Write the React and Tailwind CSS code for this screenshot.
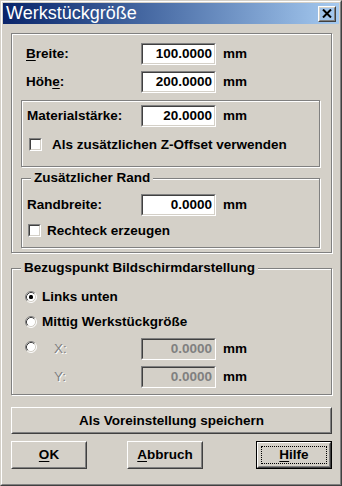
const FONT = "font-['Liberation_Sans',Arial,sans-serif]";

function Sunken({ className = '', inner = 'bg-white', children }) {
  return (
    <div className={`border border-t-[#808080] border-l-[#808080] border-r-white border-b-white ${className}`}>
      <div className={`h-full w-full border border-t-[#404040] border-l-[#404040] border-r-[#d4d0c8] border-b-[#d4d0c8] ${inner}`}>
        {children}
      </div>
    </div>
  );
}

function Raised({ className = '', children }) {
  return (
    <div className={`border border-t-white border-l-white border-r-[#404040] border-b-[#404040] ${className}`}>
      <div className="h-full w-full border border-t-[#d4d0c8] border-l-[#d4d0c8] border-r-[#808080] border-b-[#808080] flex items-center justify-center">
        {children}
      </div>
    </div>
  );
}

function Field({ value, disabled }) {
  return (
    <Sunken
      className="w-[75px] h-[22px] shrink-0"
      inner={disabled ? 'bg-[#d4d0c8] text-[#808080]' : 'bg-white text-black'}
    >
      <div className="h-full flex items-center justify-end pr-[2px]">{value}</div>
    </Sunken>
  );
}

function Etched({ className = '', caption, children }) {
  return (
    <div className={`relative border border-[#808080] shadow-[inset_1px_1px_0_#fff,1px_1px_0_#fff] ${className}`}>
      {caption && (
        <span className="absolute left-[9px] -top-[9px] leading-[16px] px-[3px] bg-[#d4d0c8]">{caption}</span>
      )}
      {children}
    </div>
  );
}

function Checkbox() {
  return <Sunken className="w-[13px] h-[13px] shrink-0" />;
}

function Radio({ checked }) {
  return (
    <svg width="12" height="12" viewBox="0 0 12 12" className="shrink-0">
      <circle cx="6" cy="6" r="5" fill="#fff" />
      <path d="M2.11 9.89A5.5 5.5 0 0 1 9.89 2.11" fill="none" stroke="#808080" />
      <path d="M9.89 2.11A5.5 5.5 0 0 1 2.11 9.89" fill="none" stroke="#fff" />
      <path d="M2.82 9.18A4.5 4.5 0 0 1 9.18 2.82" fill="none" stroke="#404040" />
      <path d="M9.18 2.82A4.5 4.5 0 0 1 2.82 9.18" fill="none" stroke="#d4d0c8" />
      {checked && <rect x="4" y="4" width="4" height="4" rx="1.5" fill="#000" />}
    </svg>
  );
}

function Row({ label, value, labelW, pl, className = '' }) {
  return (
    <div className={`flex items-center h-[22px] ${className}`} style={{ paddingLeft: pl }}>
      <span className="shrink-0" style={{ width: labelW }}>{label}</span>
      <Field value={value} />
      <span className="ml-[7px]">mm</span>
    </div>
  );
}

export default function App() {
  return (
    <div className={`w-[342px] h-[486px] bg-[#d4d0c8] border border-t-[#d4d0c8] border-l-[#d4d0c8] border-r-[#404040] border-b-[#404040] ${FONT}`}>
      <div className="h-full border border-t-white border-l-white border-r-[#808080] border-b-[#808080] p-px text-[13.5px] font-bold text-black leading-[16px]">
        {/* title bar */}
        <div className="h-[21px] flex items-center bg-linear-to-r from-[#0a246a] to-[#a6caf0]">
          <span className="pl-[3px] text-white text-[18px] font-normal leading-[21px]">Werkstückgröße</span>
          <Raised className="ml-auto mr-[3px] w-[18px] h-[16px]">
            <svg width="10" height="9" viewBox="0 0 10 9">
              <path d="M1 0.5L9 8.5M9 0.5L1 8.5" stroke="#000" strokeWidth="2" />
            </svg>
          </Raised>
        </div>

        <div className="pl-[8px]">
          {/* size group */}
          <Etched className="mt-[9px] w-[321px] h-[220px]">
            <Row className="mt-[9px]" pl="14px" labelW="115px" value="100.0000"
              label={<><span className="underline underline-offset-2">B</span>reite:</>} />
            <Row className="mt-[6px]" pl="14px" labelW="115px" value="200.0000"
              label={<>Höh<span className="underline underline-offset-2">e</span>:</>} />

            <div className="pl-[9px]">
              <Etched className="mt-[7px] w-[299px] h-[67px]">
                <Row className="mt-[4px]" pl="5px" labelW="114px" value="20.0000" label="Materialstärke:" />
                <div className="mt-[11px] h-[13px] flex items-center pl-[7px]">
                  <Checkbox />
                  <span className="ml-[10px]">Als zusätzlichen Z-Offset verwenden</span>
                </div>
              </Etched>

              <Etched className="mt-[11px] w-[299px] h-[70px]" caption="Zusätzlicher Rand">
                <Row className="mt-[15px]" pl="5px" labelW="114px" value="0.0000" label="Randbreite:" />
                <div className="mt-[8px] h-[13px] flex items-center pl-[6px]">
                  <Checkbox />
                  <span className="ml-[6px]">Rechteck erzeugen</span>
                </div>
              </Etched>
            </div>
          </Etched>

          {/* reference point group */}
          <Etched className="mt-[15px] w-[321px] h-[127px]" caption="Bezugspunkt Bildschirmdarstellung">
            <div className="mt-[20px] h-[16px] flex items-center pl-[13px]">
              <Radio checked />
              <span className="ml-[5px]">Links unten</span>
            </div>
            <div className="mt-[9px] h-[16px] flex items-center pl-[13px]">
              <Radio />
              <span className="ml-[5px]">Mittig Werkstückgröße</span>
            </div>
            <div className="mt-[8px] h-[22px] flex items-center pl-[13px]">
              <div className="self-start mt-[3px]"><Radio /></div>
              <span className="ml-[17px] w-[87px] font-normal text-[#808080] [text-shadow:1px_1px_0_#fff]">X:</span>
              <Field value="0.0000" disabled />
              <span className="ml-[7px]">mm</span>
            </div>
            <div className="mt-[6px] h-[22px] flex items-center pl-[42px]">
              <span className="w-[87px] font-normal text-[#808080] [text-shadow:1px_1px_0_#fff]">Y:</span>
              <Field value="0.0000" disabled />
              <span className="ml-[7px]">mm</span>
            </div>
          </Etched>

          <Raised className="mt-[12px] w-[321px] h-[27px]">Als Voreinstellung speichern</Raised>

          <div className="mt-[7px] w-[321px] flex">
            <Raised className="w-[76px] h-[28px]">
              <span><span className="underline underline-offset-2">O</span>K</span>
            </Raised>
            <Raised className="ml-[40px] w-[76px] h-[28px]">
              <span><span className="underline underline-offset-2">A</span>bbruch</span>
            </Raised>
            <div className="ml-auto w-[76px] h-[28px] border border-black">
              <div className="h-full border border-t-white border-l-white border-r-[#404040] border-b-[#404040]">
                <div className="h-full border border-t-[#d4d0c8] border-l-[#d4d0c8] border-r-[#808080] border-b-[#808080] p-[2px]">
                  <div className="h-full border border-dotted border-black flex items-center justify-center">
                    <span><span className="underline underline-offset-2">H</span>ilfe</span>
                  </div>
                </div>
              </div>
            </div>
          </div>
        </div>
      </div>
    </div>
  );
}
